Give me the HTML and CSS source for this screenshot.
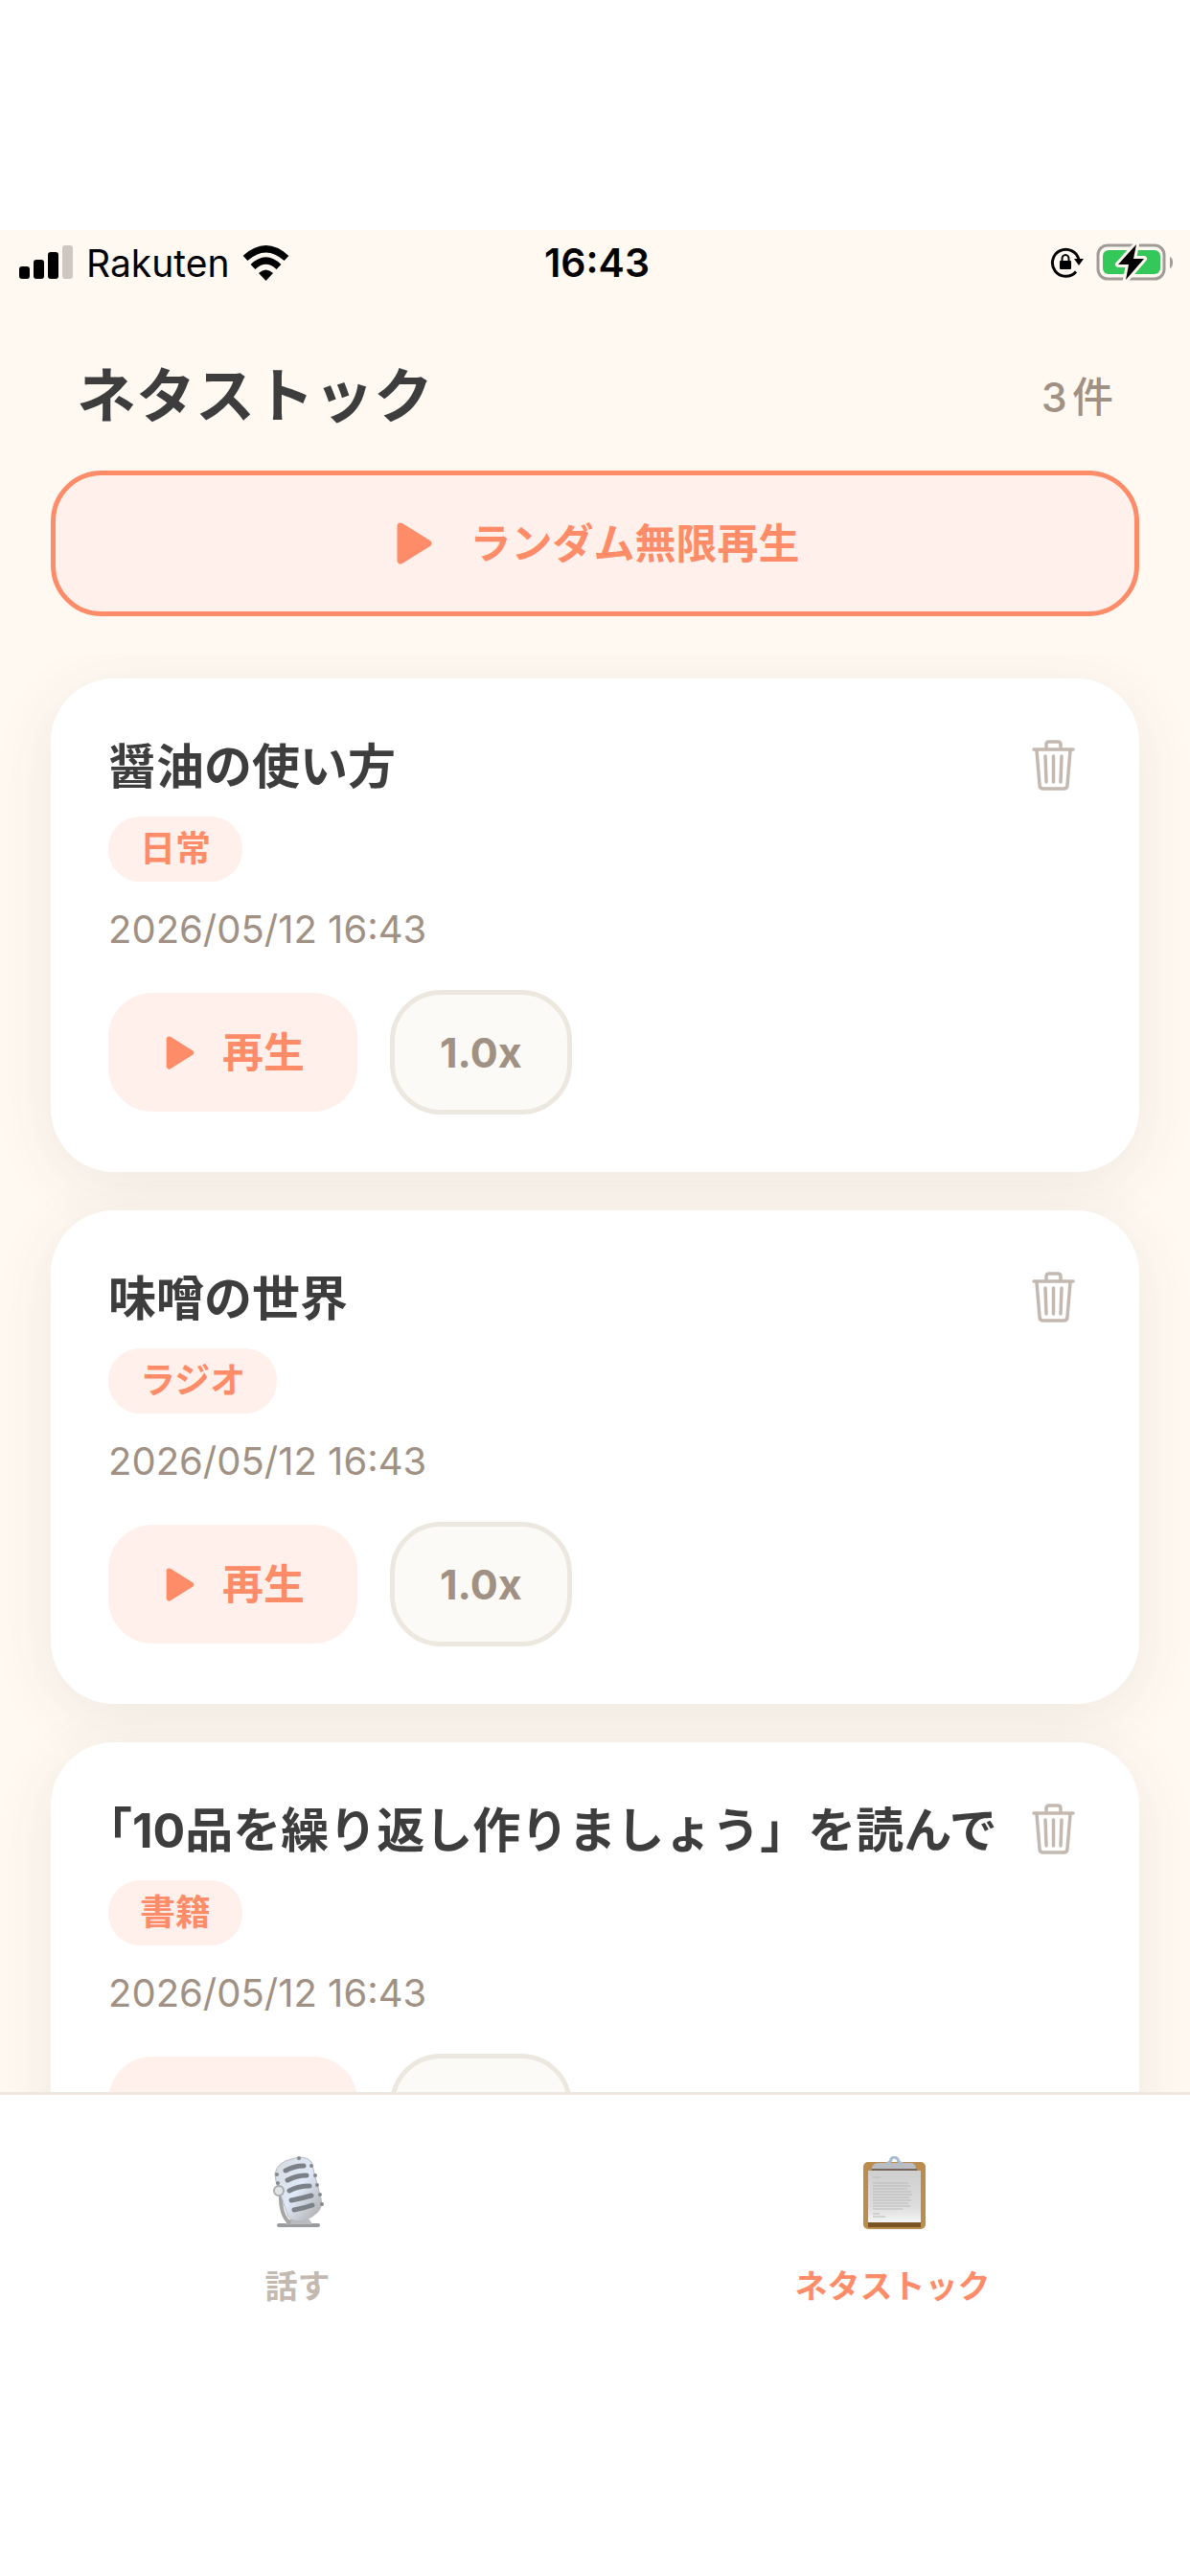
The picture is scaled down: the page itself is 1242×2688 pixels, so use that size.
FILE: index.html
```
<!DOCTYPE html>
<html lang="ja">
<head>
    <meta charset="UTF-8">
    <meta name="viewport" content="width=device-width, initial-scale=1.0">
    <title>ネタストック</title>
    <link rel="stylesheet" href="styles.css">
</head>
<body>
    <!-- Shared icons -->
    <svg class="icon-defs" aria-hidden="true">
        <symbol id="icon-play" viewBox="0 0 37 44">
            <path d="M4 4 L33 22 L4 40 Z" fill="currentColor" stroke="currentColor" stroke-width="7" stroke-linejoin="round"/>
        </symbol>
        <symbol id="icon-trash" viewBox="0 0 45 53">
            <g fill="none" stroke="currentColor" stroke-width="3.5" stroke-linecap="round" stroke-linejoin="round">
                <path d="M2 10 H43"/>
                <path d="M15 9 V5 Q15 2 18 2 H27 Q30 2 30 5 V9"/>
                <path d="M5 11 L8 47 Q8 51 12 51 H33 Q37 51 37 47 L40 11"/>
                <path d="M14 17 L15 44 M22.5 17 V44 M31 17 L30 44"/>
            </g>
        </symbol>
    </svg>

    <div class="app">
        <!-- Status bar -->
        <div class="status-bar">
            <div class="status-left">
                <svg class="icon-signal" viewBox="0 0 56 36" aria-hidden="true">
                    <rect x="0" y="22" width="11" height="13" rx="3"/>
                    <rect x="15" y="15" width="11" height="20" rx="3"/>
                    <rect x="30" y="7" width="11" height="28" rx="3"/>
                    <rect x="45" y="0" width="11" height="35" rx="3" opacity="0.2"/>
                </svg>
                <span class="carrier">Rakuten</span>
                <svg class="icon-wifi" viewBox="0 0 49 37" aria-hidden="true">
                    <path d="M3 13.5 Q24.5 -6 46 13.5" fill="none" stroke="#000" stroke-width="7"/>
                    <path d="M11 22.5 Q24.5 9.5 38 22.5" fill="none" stroke="#000" stroke-width="7"/>
                    <path d="M17 29 Q24.5 22 32 29 L24.5 37 Z"/>
                </svg>
            </div>
            <div class="status-time">16:43</div>
            <div class="status-right">
                <svg class="icon-lock" viewBox="0 0 36 34" aria-hidden="true">
                    <path d="M27 26.5 A14 14 0 1 1 30 14" fill="none" stroke="#000" stroke-width="3"/>
                    <path d="M25 13 H35 L30 20 Z"/>
                    <rect x="10" y="15" width="12" height="9" rx="1"/>
                    <path d="M12.5 16 V13 A3.5 4 0 0 1 19.5 13 V16" fill="none" stroke="#000" stroke-width="2"/>
                </svg>
                <svg class="icon-battery" viewBox="0 0 82 40" aria-hidden="true">
                    <rect x="2" y="2" width="69" height="35" rx="10" fill="none" stroke="#9f9b97" stroke-width="3"/>
                    <path d="M77 14 Q80 15 80 20 Q80 25 77 26 Z" fill="#9f9b97"/>
                    <rect x="7" y="7" width="60" height="25" rx="6" fill="#34c759"/>
                    <path d="M42 1 L23 22 H34 L31 38 L50 16 H39 Z" fill="#000" stroke="#fff9f2" stroke-width="6" paint-order="stroke" stroke-linejoin="round"/>
                </svg>
            </div>
        </div>

        <!-- Header -->
        <header class="header">
            <h1 class="header-title">ネタストック</h1>
            <span class="header-count">3件</span>
        </header>

        <button class="random-btn" type="button">
            <svg class="icon-play-lg" aria-hidden="true"><use href="#icon-play"/></svg>
            ランダム無限再生
        </button>

        <!-- Stock list -->
        <main class="stock-list">
            <article class="card">
                <div class="card-header">
                    <h2 class="card-title">醤油の使い方</h2>
                    <button class="delete-btn" type="button" aria-label="削除">
                        <svg class="icon-trash" aria-hidden="true"><use href="#icon-trash"/></svg>
                    </button>
                </div>
                <span class="tag">日常</span>
                <time class="card-date" datetime="2026-05-12T16:43">2026/05/12 16:43</time>
                <div class="card-actions">
                    <button class="play-btn" type="button">
                        <svg class="icon-play" aria-hidden="true"><use href="#icon-play"/></svg>
                        再生
                    </button>
                    <button class="speed-btn" type="button">1.0x</button>
                </div>
            </article>

            <article class="card">
                <div class="card-header">
                    <h2 class="card-title">味噌の世界</h2>
                    <button class="delete-btn" type="button" aria-label="削除">
                        <svg class="icon-trash" aria-hidden="true"><use href="#icon-trash"/></svg>
                    </button>
                </div>
                <span class="tag">ラジオ</span>
                <time class="card-date" datetime="2026-05-12T16:43">2026/05/12 16:43</time>
                <div class="card-actions">
                    <button class="play-btn" type="button">
                        <svg class="icon-play" aria-hidden="true"><use href="#icon-play"/></svg>
                        再生
                    </button>
                    <button class="speed-btn" type="button">1.0x</button>
                </div>
            </article>

            <article class="card">
                <div class="card-header">
                    <h2 class="card-title">「10品を繰り返し作りましょう」を読んで</h2>
                    <button class="delete-btn" type="button" aria-label="削除">
                        <svg class="icon-trash" aria-hidden="true"><use href="#icon-trash"/></svg>
                    </button>
                </div>
                <span class="tag">書籍</span>
                <time class="card-date" datetime="2026-05-12T16:43">2026/05/12 16:43</time>
                <div class="card-actions">
                    <button class="play-btn" type="button">
                        <svg class="icon-play" aria-hidden="true"><use href="#icon-play"/></svg>
                        再生
                    </button>
                    <button class="speed-btn" type="button">1.0x</button>
                </div>
            </article>
        </main>

        <!-- Tab bar -->
        <nav class="tab-bar">
            <a class="tab" href="#talk">
                <svg class="tab-icon" viewBox="0 0 76 76" aria-hidden="true">
                    <defs>
                        <linearGradient id="mic-body" x1="0" y1="0" x2="1" y2="1">
                            <stop offset="0" stop-color="#d5dade"/>
                            <stop offset="0.5" stop-color="#dfe9f8"/>
                            <stop offset="1" stop-color="#a9a7a5"/>
                        </linearGradient>
                    </defs>
                    <rect x="16" y="70" width="45" height="4" rx="2" fill="#9a9c9e"/>
                    <path d="M28 66 H50 L53 71 H25 Z" fill="#b9bbbd"/>
                    <path d="M20 38 Q19 62 30 70" fill="none" stroke="#a5a5a5" stroke-width="4"/>
                    <path d="M14 18 Q17 6 31 3 Q46 -2 52 6 L62 44 Q65 55 54 62 Q42 71 31 66 Q27 64 26 58 L15 26 Z" fill="url(#mic-body)" stroke="#b5b9bd"/>
                    <g fill="none" stroke="#7c8187" stroke-width="5" stroke-linecap="round">
                        <path d="M25 15 Q34 10 44 10"/>
                        <path d="M27 25 Q36 20 47 20"/>
                        <path d="M29 36 Q38 31 50 31"/>
                        <path d="M31 46 Q42 44 52 41"/>
                        <path d="M34 56 Q45 54 53 51"/>
                    </g>
                    <g fill="#85888c">
                        <circle cx="39" cy="2" r="2"/>
                        <circle cx="16" cy="19" r="2"/>
                        <circle cx="17" cy="28" r="2"/>
                        <circle cx="52" cy="10" r="2"/>
                        <circle cx="56" cy="20" r="2"/>
                        <circle cx="58" cy="30" r="2"/>
                        <circle cx="61" cy="40" r="2"/>
                        <circle cx="63" cy="50" r="2"/>
                    </g>
                    <circle cx="18" cy="36" r="5" fill="#e1e4e6" stroke="#aaadaf" stroke-width="2"/>
                </svg>
                <span class="tab-label">話す</span>
            </a>
            <a class="tab active" href="#stock" aria-current="page">
                <svg class="tab-icon" viewBox="0 0 76 76" aria-hidden="true">
                    <defs>
                        <linearGradient id="sheet" x1="0" y1="0" x2="0" y2="1">
                            <stop offset="0" stop-color="#cfcfd0"/>
                            <stop offset="0.7" stop-color="#dddddd"/>
                            <stop offset="1" stop-color="#f4f4f4"/>
                        </linearGradient>
                    </defs>
                    <rect x="7" y="6" width="65" height="70" rx="5" fill="#ba8c4e"/>
                    <rect x="12" y="68" width="55" height="6" fill="#7b5424"/>
                    <rect x="12" y="15" width="55" height="54" fill="url(#sheet)"/>
                    <g stroke="#b9b9b9" stroke-width="1">
                        <path d="M17 22 H25 M17 28 H54 M17 31 H56 M17 34 H53 M17 37 H57 M17 40 H58 M17 43 H55 M17 46 H57 M17 49 H54 M17 52 H56 M17 55 H48 M17 60 H24 M17 63 H30"/>
                    </g>
                    <path d="M16 15 V12 Q17 7 23 7 H56 Q61 7 62 12 V15 Z" fill="#b9bcc0"/>
                    <rect x="16" y="13" width="47" height="2" fill="#76665b"/>
                    <path d="M31 8 Q36 6 36 3 Q39 -1 43 3 Q43 6 48 8" fill="none" stroke="#a8bbcf" stroke-width="3"/>
                </svg>
                <span class="tab-label">ネタストック</span>
            </a>
        </nav>
    </div>
</body>
</html>
```
FILE: styles.css
```
:root {
    --bg: #fff9f2;
    --card: #ffffff;
    --accent: #ff8c69;
    --accent-soft: #fff0eb;
    --text: #3d3d3d;
    --text-sub: #a09184;
    --muted: #c4b9b0;
    --line: #ede8df;
}

* {
    margin: 0;
    padding: 0;
    box-sizing: border-box;
}

body {
    font-family: Inter, 'Noto Sans CJK JP', sans-serif;
    background: #ffffff;
    color: var(--text);
    height: 100vh;
    padding-top: 240px;
}

button {
    font-family: inherit;
    border: none;
    cursor: pointer;
}

.icon-defs {
    position: absolute;
    width: 0;
    height: 0;
}

.app {
    height: 100%;
    display: flex;
    flex-direction: column;
    background: var(--bg);
}

/* Status bar */
.status-bar {
    display: grid;
    grid-template-columns: 1fr auto 1fr;
    align-items: center;
    height: 68px;
    padding: 0 16px 0 20px;
    color: #000000;
}

.status-left,
.status-right {
    display: flex;
    align-items: center;
}

.status-left {
    gap: 14px;
}

.status-right {
    justify-content: flex-end;
    gap: 12px;
}

.carrier {
    font-size: 39px;
}

.status-time {
    font-size: 41px;
    font-weight: 600;
}

.icon-signal {
    width: 56px;
    height: 36px;
}

.icon-wifi {
    width: 49px;
    height: 37px;
}

.icon-lock {
    width: 36px;
    height: 34px;
}

.icon-battery {
    width: 82px;
    height: 40px;
}

/* Header */
.header {
    display: flex;
    justify-content: space-between;
    align-items: center;
    padding: 68px 80px 39px;
}

.header-title {
    font-size: 62px;
    line-height: 76px;
    font-weight: 700;
}

.header-count {
    font-size: 43px;
    line-height: 60px;
    font-weight: 500;
    color: var(--text-sub);
    text-autospace: normal;
}

.random-btn {
    display: flex;
    justify-content: center;
    align-items: center;
    gap: 40px;
    margin: 0 53px 39px;
    padding: 41px 41px 41px 47px;
    background: var(--accent-soft);
    border: 5px solid var(--accent);
    border-radius: 53px;
    color: var(--accent);
    font-size: 43px;
    line-height: 60px;
    font-weight: 700;
}

.icon-play-lg {
    width: 37px;
    height: 44px;
}

/* Stock list */
.stock-list {
    flex: 1;
    min-height: 0;
    overflow: hidden;
    padding: 26px 53px;
}

.card {
    display: flex;
    flex-direction: column;
    align-items: flex-start;
    margin-bottom: 40px;
    padding: 60px;
    background: var(--card);
    border-radius: 66px;
    box-shadow: 0 13px 66px rgba(61, 61, 61, 0.09);
}

.card-header {
    display: flex;
    justify-content: space-between;
    align-items: flex-start;
    width: 100%;
    margin-bottom: 20px;
}

.card-title {
    font-size: 50px;
    line-height: 64px;
    font-weight: 700;
    white-space: nowrap;
    text-spacing-trim: trim-start;
}

.delete-btn {
    display: flex;
    justify-content: center;
    align-items: center;
    width: 60px;
    height: 60px;
    background: none;
    color: var(--muted);
}

.icon-trash {
    width: 45px;
    height: 53px;
}

.tag {
    padding: 4px 33px;
    background: var(--accent-soft);
    border-radius: 33px;
    color: var(--accent);
    font-size: 37px;
    line-height: 60px;
    font-weight: 700;
}

.card-date {
    margin: 26px 0 39px;
    font-size: 40px;
    line-height: 48px;
    color: var(--text-sub);
}

.card-actions {
    display: flex;
    align-items: center;
    gap: 34px;
}

.play-btn {
    display: flex;
    align-items: center;
    gap: 29px;
    padding: 32px 55px 32px 60px;
    background: var(--accent-soft);
    border-radius: 46px;
    color: var(--accent);
    font-size: 43px;
    line-height: 60px;
    font-weight: 700;
}

.icon-play {
    width: 30px;
    height: 35px;
}

.speed-btn {
    padding: 30px 47px;
    background: #fcfaf6;
    border: 5px solid var(--line);
    border-radius: 53px;
    color: var(--text-sub);
    font-size: 43px;
    line-height: 60px;
    font-weight: 700;
}

/* Tab bar */
.tab-bar {
    display: flex;
    padding: 64px 0 278px;
    background: #ffffff;
    border-top: 3px solid var(--line);
}

.tab {
    flex: 1;
    display: flex;
    flex-direction: column;
    align-items: center;
    gap: 36px;
    color: var(--muted);
    text-decoration: none;
}

.tab.active {
    color: var(--accent);
}

.tab-icon {
    width: 76px;
    height: 76px;
}

.tab-label {
    font-size: 34px;
    line-height: 48px;
    font-weight: 700;
}
```
